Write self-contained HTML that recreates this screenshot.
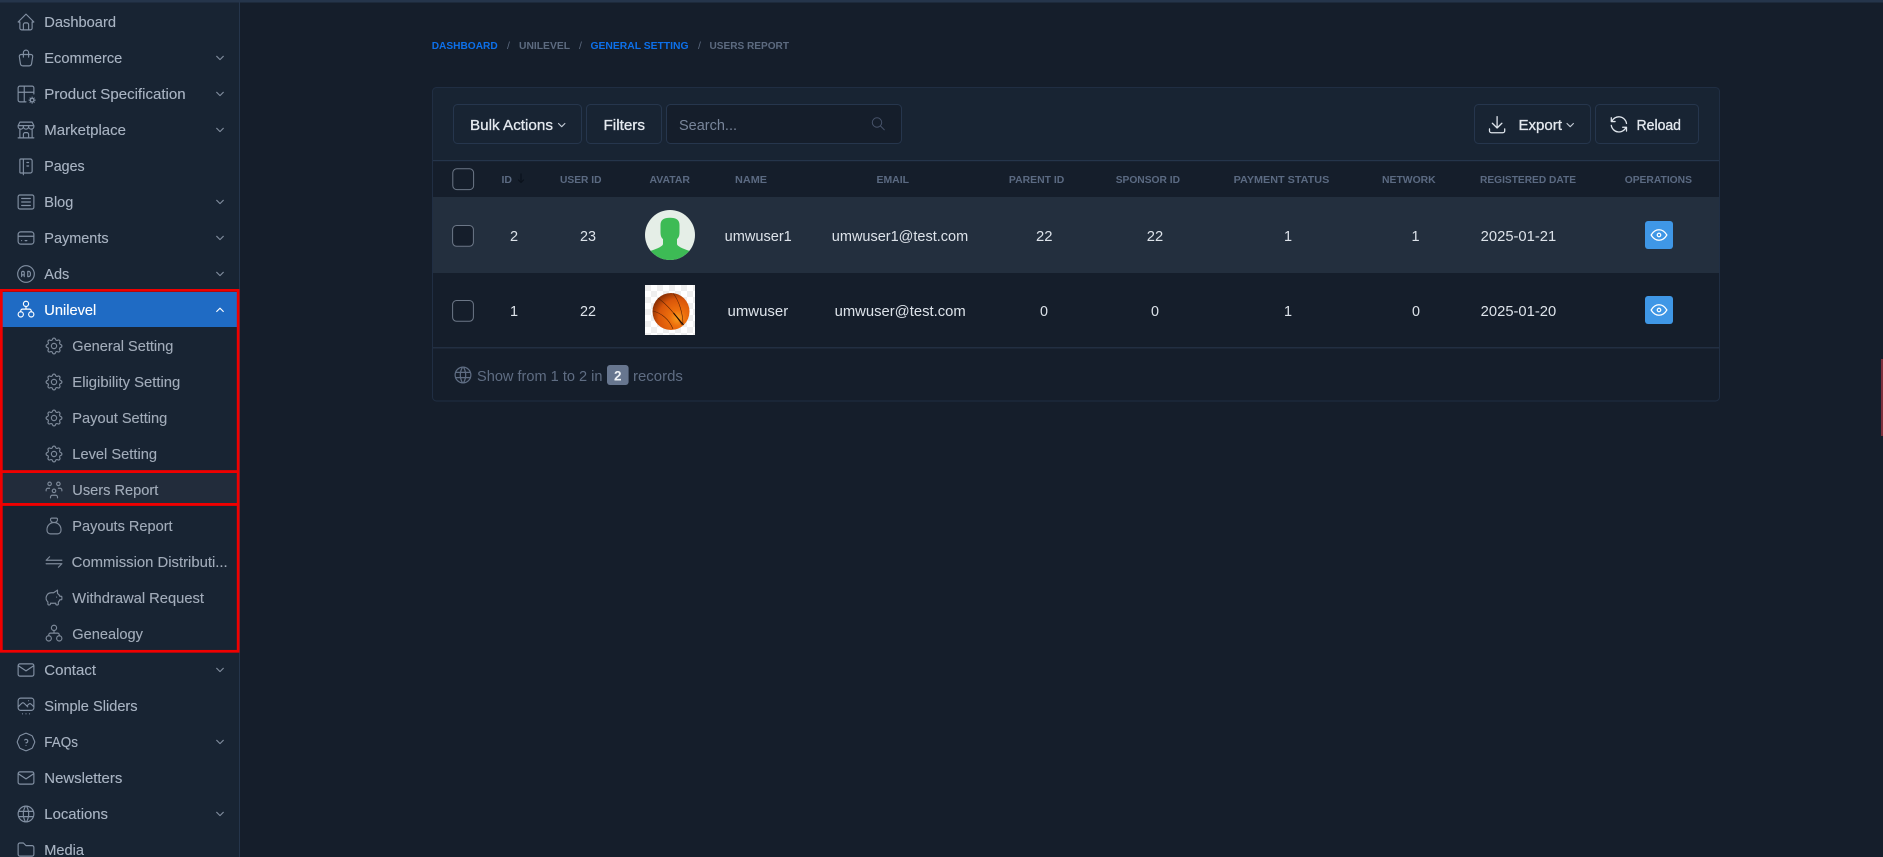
<!DOCTYPE html>
<html lang="en">
<head>
<meta charset="utf-8">
<title>Users Report</title>
<style>
html,body{margin:0;padding:0;background:#151e2b;width:1883px;height:857px;overflow:hidden}
svg{display:block}
text{font-family:"Liberation Sans",Arial,sans-serif;white-space:pre}
.n{font-size:14.5px;fill:#a9b4c3;stroke:#a9b4c3;stroke-width:.12}
.s{font-size:14.5px;fill:#a2acba;stroke:#a2acba;stroke-width:.12}
.h{font-size:10.5px;font-weight:bold;fill:#5b6a82}
.b{font-size:10.5px;font-weight:bold}
.d{font-size:14.5px;fill:#dde3ea}
.m{text-anchor:middle}
.btn{font-size:14.5px;fill:#e4e9ef;stroke:#e4e9ef;stroke-width:.3}
.f{font-size:14.5px;fill:#5f6d83}
.i{fill:none;stroke:#8290a3;stroke-width:1.3;stroke-linecap:round;stroke-linejoin:round}
.i2{fill:none;stroke:#7d8999;stroke-width:1.3;stroke-linecap:round;stroke-linejoin:round}
.c{fill:none;stroke:#7f8b9c;stroke-width:1.1;stroke-linecap:round;stroke-linejoin:round}
</style>
</head>
<body>
<svg xmlns="http://www.w3.org/2000/svg" width="1883" height="857" viewBox="0 0 1883 857">
<defs>
<symbol id="home" viewBox="0 0 24 24"><path d="M5 12l-2 0l9 -9l9 9l-2 0M5 12v7a2 2 0 0 0 2 2h10a2 2 0 0 0 2 -2v-7M9 21v-6a2 2 0 0 1 2 -2h2a2 2 0 0 1 2 2v6"/></symbol>
<symbol id="bag" viewBox="0 0 24 24"><path d="M6.331 8h11.339a2 2 0 0 1 1.977 2.304l-1.255 8.152a3 3 0 0 1 -2.966 2.544h-6.852a3 3 0 0 1 -2.965 -2.544l-1.255 -8.152a2 2 0 0 1 1.977 -2.304zM9 11v-5a3 3 0 0 1 6 0v5"/></symbol>
<symbol id="spec" viewBox="0 0 24 24"><path d="M12 21h-7a2 2 0 0 1 -2 -2v-14a2 2 0 0 1 2 -2h14a2 2 0 0 1 2 2v7M3 10h18M10 3v18"/><circle cx="19" cy="19" r="2"/><path d="M19 15.500v1.200M19 21.300v1.200M15.500 19h1.200M21.300 19h1.200M16.600 16.600l.8 .8M20.600 20.600l.8 .8M16.600 21.400l.8 -.8M20.600 17.400l.8 -.8"/></symbol>
<symbol id="store" viewBox="0 0 24 24"><path d="M3 21l18 0M3 7v1a3 3 0 0 0 6 0v-1m0 1a3 3 0 0 0 6 0v-1m0 1a3 3 0 0 0 6 0v-1h-18l2 -4h14l2 4M5 21l0 -10.150M19 21l0 -10.150M9 21v-4a2 2 0 0 1 2 -2h2a2 2 0 0 1 2 2v4"/></symbol>
<symbol id="note" viewBox="0 0 24 24"><path d="M6 4h11a2 2 0 0 1 2 2v12a2 2 0 0 1 -2 2h-11a1 1 0 0 1 -1 -1v-14a1 1 0 0 1 1 -1m3 0v18M13 8l2 0M13 12l2 0"/></symbol>
<symbol id="article" viewBox="0 0 24 24"><path d="M3 6a2 2 0 0 1 2 -2h14a2 2 0 0 1 2 2v12a2 2 0 0 1 -2 2h-14a2 2 0 0 1 -2 -2zM7 8h10M7 12h10M7 16h10"/></symbol>
<symbol id="card" viewBox="0 0 24 24"><path d="M3 8a3 3 0 0 1 3 -3h12a3 3 0 0 1 3 3v8a3 3 0 0 1 -3 3h-12a3 3 0 0 1 -3 -3zM3 10l18 0M7 15l.01 0M11 15l2 0"/></symbol>
<symbol id="ad" viewBox="0 0 24 24"><path d="M12 12m-9.500 0a9.500 9.500 0 1 0 19 0a9.500 9.500 0 1 0 -19 0M7 15v-4.500a1.500 1.500 0 0 1 3 0v4.500M7 13h3M14 9v6h1a2 2 0 0 0 2 -2v-2a2 2 0 0 0 -2 -2h-1z"/></symbol>
<symbol id="tree" viewBox="0 0 24 24"><circle cx="12" cy="5" r="3"/><circle cx="6" cy="17" r="3"/><circle cx="18" cy="17" r="3"/><path d="M12 8v3M6 14v-1a2 2 0 0 1 2 -2h8a2 2 0 0 1 2 2v1"/></symbol>
<symbol id="gear" viewBox="0 0 24 24"><path d="M10.325 4.317c.426 -1.756 2.924 -1.756 3.350 0a1.724 1.724 0 0 0 2.573 1.066c1.543 -.94 3.310 .826 2.370 2.370a1.724 1.724 0 0 0 1.065 2.572c1.756 .426 1.756 2.924 0 3.350a1.724 1.724 0 0 0 -1.066 2.573c.94 1.543 -.826 3.310 -2.370 2.370a1.724 1.724 0 0 0 -2.572 1.065c-.426 1.756 -2.924 1.756 -3.350 0a1.724 1.724 0 0 0 -2.573 -1.066c-1.543 .94 -3.310 -.826 -2.370 -2.370a1.724 1.724 0 0 0 -1.065 -2.572c-1.756 -.426 -1.756 -2.924 0 -3.350a1.724 1.724 0 0 0 1.066 -2.573c-.94 -1.543 .826 -3.310 2.370 -2.370c1 .608 2.296 .07 2.572 -1.065z"/><circle cx="12" cy="12" r="3"/></symbol>
<symbol id="users" viewBox="0 0 24 24"><path d="M10 13a2 2 0 1 0 4 0a2 2 0 0 0 -4 0M8 21v-1a2 2 0 0 1 2 -2h4a2 2 0 0 1 2 2v1M15 5a2 2 0 1 0 4 0a2 2 0 0 0 -4 0M17 10h2a2 2 0 0 1 2 2v1M5 5a2 2 0 1 0 4 0a2 2 0 0 0 -4 0M3 13v-1a2 2 0 0 1 2 -2h2"/></symbol>
<symbol id="money" viewBox="0 0 24 24"><path d="M9.500 3h5a1.500 1.500 0 0 1 1.500 1.500a3.500 3.500 0 0 1 -3.500 3.500h-1a3.500 3.500 0 0 1 -3.500 -3.500a1.500 1.500 0 0 1 1.500 -1.500zM4 17v-1a8 8 0 1 1 16 0v1a4 4 0 0 1 -4 4h-8a4 4 0 0 1 -4 -4z"/></symbol>
<symbol id="swap" viewBox="0 0 24 24"><path d="M21 10h-18l4 -4M3 14h18l-4 4"/></symbol>
<symbol id="pig" viewBox="0 0 24 24"><path d="M15 11v.01M16 3l0 3.803a6.019 6.019 0 0 1 2.658 3.197h1.341a1 1 0 0 1 1 1v2a1 1 0 0 1 -1 1h-1.342a6.008 6.008 0 0 1 -1.658 2.473v2.027a1.500 1.500 0 0 1 -3 0v-.583a6.040 6.040 0 0 1 -1 .083h-4a6.040 6.040 0 0 1 -1 -.083v.583a1.500 1.500 0 0 1 -3 0v-2.027a6 6 0 0 1 3.999 -10.473h2.500l4.500 -3z"/></symbol>
<symbol id="mail" viewBox="0 0 24 24"><path d="M3 7a2 2 0 0 1 2 -2h14a2 2 0 0 1 2 2v10a2 2 0 0 1 -2 2h-14a2 2 0 0 1 -2 -2v-10zM3 7l9 6l9 -6"/></symbol>
<symbol id="slide" viewBox="0 0 24 24"><path d="M15 6l.01 0M3 6a3 3 0 0 1 3 -3h12a3 3 0 0 1 3 3v8a3 3 0 0 1 -3 3h-12a3 3 0 0 1 -3 -3zM3 13l4 -4a3 5 0 0 1 3 0l4 4M13 12l2 -2a3 5 0 0 1 3 0l3 3M8 21l.01 0M12 21l.01 0M16 21l.01 0"/></symbol>
<symbol id="help" viewBox="0 0 24 24"><path d="M12.802 2.165l5.575 2.389c.48 .206 .863 .589 1.070 1.070l2.388 5.574c.22 .512 .22 1.092 0 1.604l-2.389 5.575c-.206 .48 -.589 .863 -1.070 1.070l-5.574 2.388c-.512 .22 -1.092 .22 -1.604 0l-5.575 -2.389a2.036 2.036 0 0 1 -1.070 -1.070l-2.388 -5.574a2.036 2.036 0 0 1 0 -1.604l2.389 -5.575c.206 -.48 .589 -.863 1.070 -1.070l5.574 -2.388a2.036 2.036 0 0 1 1.604 0zM12 16v.01M12 13a2 2 0 0 0 .914 -3.782a1.980 1.980 0 0 0 -2.414 .483"/></symbol>
<symbol id="world" viewBox="0 0 24 24"><path d="M3 12a9 9 0 1 0 18 0a9 9 0 0 0 -18 0M3.600 9h16.800M3.600 15h16.800M11.500 3a17 17 0 0 0 0 18M12.500 3a17 17 0 0 1 0 18"/></symbol>
<symbol id="folder" viewBox="0 0 24 24"><path d="M5 4h4l3 3h7a2 2 0 0 1 2 2v8a2 2 0 0 1 -2 2h-14a2 2 0 0 1 -2 -2v-11a2 2 0 0 1 2 -2"/></symbol>
<symbol id="eye" viewBox="0 0 24 24"><path d="M10 12a2 2 0 1 0 4 0a2 2 0 0 0 -4 0M21 12c-2.400 4 -5.400 6 -9 6c-3.600 0 -6.600 -2 -9 -6c2.400 -4 5.400 -6 9 -6c3.600 0 6.600 2 9 6"/></symbol>
<pattern id="chk" x="645" y="285" width="12" height="12" patternUnits="userSpaceOnUse"><rect width="12" height="12" fill="#fff"/><rect width="6" height="6" fill="#efefef"/><rect x="6" y="6" width="6" height="6" fill="#efefef"/></pattern>
<radialGradient id="ball" cx="0.68" cy="0.68" r="0.72"><stop offset="0" stop-color="#f8a020"/><stop offset=".3" stop-color="#ee6f0c"/><stop offset=".72" stop-color="#d9560a"/><stop offset="1" stop-color="#8f3204"/></radialGradient>
<clipPath id="av1"><circle cx="670" cy="235" r="25"/></clipPath>
<clipPath id="av2"><circle cx="671" cy="311.500" r="18.500"/></clipPath>
</defs>

<!-- backgrounds -->
<rect width="1883" height="857" fill="#151e2b"/>
<rect x="0" y="0" width="239" height="857" fill="#182433"/>
<rect x="239" y="0" width="1" height="857" fill="#25354b"/>
<rect x="0" y="0" width="1883" height="2.500" fill="#25354b"/>
<rect x="1881" y="359" width="2" height="77" fill="#80303c"/>

<!-- sidebar highlights -->
<rect x="0" y="292" width="239" height="35" fill="#1f6bc4"/>
<rect x="0" y="473" width="239" height="30" fill="#222c3b"/>

<!-- sidebar icons -->
<g class="i">
<use href="#home" x="15.500" y="11.500" width="21" height="21"/>
<use href="#bag" x="15.500" y="47.500" width="21" height="21"/>
<use href="#spec" x="15.500" y="83.500" width="21" height="21"/>
<use href="#store" x="15.500" y="119.500" width="21" height="21"/>
<use href="#note" x="15.500" y="155.500" width="21" height="21"/>
<use href="#article" x="15.500" y="191.500" width="21" height="21"/>
<use href="#card" x="15.500" y="227.500" width="21" height="21"/>
<use href="#ad" x="15.500" y="263.500" width="21" height="21"/>
<use href="#mail" x="15.500" y="659.500" width="21" height="21"/>
<use href="#slide" x="15.500" y="695.500" width="21" height="21"/>
<use href="#help" x="15.500" y="731.500" width="21" height="21"/>
<use href="#mail" x="15.500" y="767.500" width="21" height="21"/>
<use href="#world" x="15.500" y="803.500" width="21" height="21"/>
<use href="#folder" x="15.500" y="839.500" width="21" height="21"/>
</g>
<g class="i" style="stroke:#fff"><use href="#tree" x="15.500" y="299.500" width="21" height="21"/></g>
<g class="i2">
<use href="#gear" x="43.500" y="335.500" width="21" height="21"/>
<use href="#gear" x="43.500" y="371.500" width="21" height="21"/>
<use href="#gear" x="43.500" y="407.500" width="21" height="21"/>
<use href="#gear" x="43.500" y="443.500" width="21" height="21"/>
<use href="#users" x="43.500" y="479.500" width="21" height="21"/>
<use href="#money" x="43.500" y="515.500" width="21" height="21"/>
<use href="#swap" x="43.500" y="551.500" width="21" height="21"/>
<use href="#pig" x="43.500" y="587.500" width="21" height="21"/>
<use href="#tree" x="43.500" y="623.500" width="21" height="21"/>
</g>

<!-- sidebar text -->
<text class="n" x="44.300" y="27" textLength="71.700" lengthAdjust="spacingAndGlyphs">Dashboard</text>
<text class="n" x="44.300" y="63" textLength="78" lengthAdjust="spacingAndGlyphs">Ecommerce</text>
<text class="n" x="44.300" y="99" textLength="141.300" lengthAdjust="spacingAndGlyphs">Product Specification</text>
<text class="n" x="44.300" y="135" textLength="81.700" lengthAdjust="spacingAndGlyphs">Marketplace</text>
<text class="n" x="44.300" y="171" textLength="40.300" lengthAdjust="spacingAndGlyphs">Pages</text>
<text class="n" x="44.300" y="207" textLength="29" lengthAdjust="spacingAndGlyphs">Blog</text>
<text class="n" x="44.300" y="243" textLength="64.300" lengthAdjust="spacingAndGlyphs">Payments</text>
<text class="n" x="44.300" y="279" textLength="25" lengthAdjust="spacingAndGlyphs">Ads</text>
<text class="n" x="44.300" y="315" textLength="52" lengthAdjust="spacingAndGlyphs" style="fill:#fff;stroke:#fff">Unilevel</text>
<text class="s" x="72.300" y="351" textLength="101" lengthAdjust="spacingAndGlyphs">General Setting</text>
<text class="s" x="72.300" y="387" textLength="108" lengthAdjust="spacingAndGlyphs">Eligibility Setting</text>
<text class="s" x="72.300" y="423" textLength="95" lengthAdjust="spacingAndGlyphs">Payout Setting</text>
<text class="s" x="72.300" y="459" textLength="84.700" lengthAdjust="spacingAndGlyphs">Level Setting</text>
<text class="s" x="72.300" y="495" textLength="86" lengthAdjust="spacingAndGlyphs">Users Report</text>
<text class="s" x="72.300" y="531" textLength="100.300" lengthAdjust="spacingAndGlyphs">Payouts Report</text>
<text class="s" x="71.700" y="567" textLength="156" lengthAdjust="spacingAndGlyphs">Commission Distributi...</text>
<text class="s" x="72.300" y="603" textLength="131.700" lengthAdjust="spacingAndGlyphs">Withdrawal Request</text>
<text class="s" x="72.300" y="639" textLength="70.700" lengthAdjust="spacingAndGlyphs">Genealogy</text>
<text class="n" x="44.300" y="675" textLength="51.700" lengthAdjust="spacingAndGlyphs">Contact</text>
<text class="n" x="44.300" y="711" textLength="93.300" lengthAdjust="spacingAndGlyphs">Simple Sliders</text>
<text class="n" x="44.300" y="747" textLength="33.700" lengthAdjust="spacingAndGlyphs">FAQs</text>
<text class="n" x="44.300" y="783" textLength="78" lengthAdjust="spacingAndGlyphs">Newsletters</text>
<text class="n" x="44.300" y="819" textLength="63.700" lengthAdjust="spacingAndGlyphs">Locations</text>
<text class="n" x="44.300" y="855" textLength="39.700" lengthAdjust="spacingAndGlyphs">Media</text>

<!-- chevrons -->
<g class="c">
<path d="M216.700 56.300l3.300 3.300 3.300-3.300M216.700 92.300l3.300 3.300 3.300-3.300M216.700 128.300l3.300 3.300 3.300-3.300M216.700 200.300l3.300 3.300 3.300-3.300M216.700 236.300l3.300 3.300 3.300-3.300M216.700 272.300l3.300 3.300 3.300-3.300M216.700 668.300l3.300 3.300 3.300-3.300M216.700 740.300l3.300 3.300 3.300-3.300M216.700 812.300l3.300 3.300 3.300-3.300"/>
<path d="M216.700 311.500l3.300-3.300 3.300 3.300" style="stroke:#fff"/>
</g>

<!-- red highlight boxes -->
<g fill="none" stroke="#f00000" stroke-width="2.700">
<rect x="1.350" y="290.350" width="236.800" height="181.300"/>
<rect x="1.350" y="471.600" width="236.800" height="32.800"/>
<rect x="1.350" y="504.400" width="236.800" height="146.900"/>
</g>

<!-- breadcrumb -->
<text class="b" x="431.700" y="49" textLength="66" lengthAdjust="spacingAndGlyphs" fill="#0d70ea">DASHBOARD</text>
<text class="b" x="507" y="49" fill="#5d6b80" style="font-weight:normal">/</text>
<text class="b" x="519" y="49" textLength="51" lengthAdjust="spacingAndGlyphs" fill="#5d6b80">UNILEVEL</text>
<text class="b" x="579" y="49" fill="#5d6b80" style="font-weight:normal">/</text>
<text class="b" x="590.500" y="49" textLength="98" lengthAdjust="spacingAndGlyphs" fill="#0d70ea">GENERAL SETTING</text>
<text class="b" x="698" y="49" fill="#5d6b80" style="font-weight:normal">/</text>
<text class="b" x="709.500" y="49" textLength="79.500" lengthAdjust="spacingAndGlyphs" fill="#5d6b80">USERS REPORT</text>

<!-- card -->
<rect x="432.500" y="87.500" width="1287" height="313.500" rx="4" fill="#151e2b"/>
<path d="M433 161V91.500a4 4 0 0 1 4-4H1715a4 4 0 0 1 4 4V161z" fill="#182433"/>
<rect x="433" y="160" width="1286" height="1.200" fill="#25354b"/>
<rect x="433" y="197" width="1286" height="76" fill="#232f3e"/>
<rect x="433" y="347" width="1286" height="1.500" fill="#222f42"/>
<rect x="432.500" y="87.500" width="1287" height="313.500" rx="4" fill="none" stroke="#202e43"/>

<!-- toolbar -->
<g stroke="#26364d" fill="#182433">
<rect x="453.500" y="104.500" width="128" height="39" rx="4"/>
<rect x="586.500" y="104.500" width="75" height="39" rx="4"/>
<rect x="666.500" y="104.500" width="235" height="39" rx="4" fill="#151e2b"/>
<rect x="1474.500" y="104.500" width="116" height="39" rx="4"/>
<rect x="1595.500" y="104.500" width="103" height="39" rx="4"/>
</g>
<text class="btn" x="470" y="130" textLength="83" lengthAdjust="spacingAndGlyphs">Bulk Actions</text>
<path d="M558.500 123.500l3.200 3.200 3.200-3.200" fill="none" stroke="#c4ccd6" stroke-width="1.100" stroke-linecap="round" stroke-linejoin="round"/>
<text class="btn" x="603.500" y="130" textLength="41.500" lengthAdjust="spacingAndGlyphs">Filters</text>
<text x="679" y="130" font-size="14.500" fill="#78859a" textLength="58" lengthAdjust="spacingAndGlyphs">Search...</text>
<path d="M877 117.800a4.700 4.700 0 1 0 0 9.400 4.700 4.700 0 0 0 0-9.400zM880.500 126l3.800 3.800" fill="none" stroke="#47536a" stroke-width="1" stroke-linecap="round"/>
<g fill="none" stroke="#dfe5ec" stroke-width="1.350" stroke-linecap="round" stroke-linejoin="round">
<g transform="translate(1485.700 112.800) scale(.95)"><path d="M4 17v2a2 2 0 0 0 2 2h12a2 2 0 0 0 2 -2v-2M7 11l5 5l5 -5M12 4l0 12"/></g>
<g transform="translate(1607.500 113) scale(.95)"><path d="M20 11a8.100 8.100 0 0 0 -15.500 -2m-.5 -4v4h4M4 13a8.100 8.100 0 0 0 15.500 2m.5 4v-4h-4"/></g>
</g>
<text class="btn" x="1518.500" y="130" textLength="43.500" lengthAdjust="spacingAndGlyphs">Export</text>
<path d="M1567 123.500l3.200 3.200 3.200-3.200" fill="none" stroke="#c4ccd6" stroke-width="1.100" stroke-linecap="round" stroke-linejoin="round"/>
<text class="btn" x="1636.500" y="130" textLength="44.500" lengthAdjust="spacingAndGlyphs">Reload</text>

<!-- table head -->
<rect x="452.800" y="168.800" width="20.800" height="20.800" rx="4" fill="none" stroke="#6c7787" stroke-width="1"/>
<text class="h" x="501.500" y="183" textLength="10.500" lengthAdjust="spacingAndGlyphs">ID</text>
<path d="M521 174v8.500M518.500 180l2.500 2.500 2.500-2.500" fill="none" stroke="#0b121c" stroke-width="1.200" stroke-linecap="round" stroke-linejoin="round"/>
<text class="h" x="560" y="183" textLength="41.500" lengthAdjust="spacingAndGlyphs">USER ID</text>
<text class="h" x="649.500" y="183" textLength="40.500" lengthAdjust="spacingAndGlyphs">AVATAR</text>
<text class="h" x="735" y="183" textLength="32" lengthAdjust="spacingAndGlyphs">NAME</text>
<text class="h" x="876.500" y="183" textLength="32.500" lengthAdjust="spacingAndGlyphs">EMAIL</text>
<text class="h" x="1008.900" y="183" textLength="55.400" lengthAdjust="spacingAndGlyphs">PARENT ID</text>
<text class="h" x="1115.700" y="183" textLength="64.300" lengthAdjust="spacingAndGlyphs">SPONSOR ID</text>
<text class="h" x="1233.600" y="183" textLength="95.700" lengthAdjust="spacingAndGlyphs">PAYMENT STATUS</text>
<text class="h" x="1382" y="183" textLength="53.700" lengthAdjust="spacingAndGlyphs">NETWORK</text>
<text class="h" x="1480" y="183" textLength="96" lengthAdjust="spacingAndGlyphs">REGISTERED DATE</text>
<text class="h" x="1624.700" y="183" textLength="67.300" lengthAdjust="spacingAndGlyphs">OPERATIONS</text>

<!-- row 1 -->
<rect x="452.600" y="225.500" width="20.800" height="20.800" rx="4" fill="#151e2b" stroke="#6c7787" stroke-width="1"/>
<text class="d m" x="514" y="241">2</text>
<text class="d" x="580" y="241" textLength="16" lengthAdjust="spacingAndGlyphs">23</text>
<circle cx="670" cy="235" r="25" fill="#e5eee7"/>
<path clip-path="url(#av1)" d="M660.500 225C660.500 219.500 664 217.700 670 217.700C676 217.700 679.500 219.500 679.500 225L679.500 232C679.500 236 678.500 238 677 239L677 244C677 246 682 248.500 690 251L690 262L650 262L650 251C658 248.500 663 246 663 244L663 239C661.500 238 660.500 236 660.500 232Z" fill="#3dbb55"/>
<text class="d" x="724.600" y="241" textLength="67.200" lengthAdjust="spacingAndGlyphs">umwuser1</text>
<text class="d" x="831.800" y="241" textLength="136.400" lengthAdjust="spacingAndGlyphs">umwuser1@test.com</text>
<text class="d" x="1036" y="241" textLength="16.500" lengthAdjust="spacingAndGlyphs">22</text>
<text class="d" x="1146.800" y="241" textLength="16.400" lengthAdjust="spacingAndGlyphs">22</text>
<text class="d m" x="1288" y="241">1</text>
<text class="d m" x="1415.500" y="241">1</text>
<text class="d" x="1480.700" y="241" textLength="75.500" lengthAdjust="spacingAndGlyphs">2025-01-21</text>
<rect x="1645" y="221" width="28" height="28" rx="3" fill="#3f97e6"/>
<g fill="none" stroke="#fff" stroke-width="1.400" stroke-linecap="round" stroke-linejoin="round"><use href="#eye" x="1648.500" y="224.500" width="21" height="21"/></g>

<!-- row 2 -->
<rect x="452.600" y="300.500" width="20.800" height="20.800" rx="4" fill="none" stroke="#6c7787" stroke-width="1"/>
<text class="d m" x="514" y="316">1</text>
<text class="d" x="580" y="316" textLength="16" lengthAdjust="spacingAndGlyphs">22</text>
<rect x="645" y="285" width="50" height="50" fill="url(#chk)"/>
<circle cx="671" cy="311.500" r="18.500" fill="url(#ball)"/>
<g clip-path="url(#av2)" fill="none" stroke="#5a2306" stroke-width=".6">
<path d="M658 298c8 6 16 14 24 27"/>
<path d="M673 293c6 8 10 20 10 32"/>
<path d="M653 311c8 2 16 8 20 18"/>
</g>
<path d="M673.500 313l10 12" stroke="#1a0a02" stroke-width="1" fill="none"/>
<text class="d" x="727.500" y="316" textLength="60.700" lengthAdjust="spacingAndGlyphs">umwuser</text>
<text class="d" x="834.600" y="316" textLength="131.100" lengthAdjust="spacingAndGlyphs">umwuser@test.com</text>
<text class="d" x="1040" y="316" textLength="8" lengthAdjust="spacingAndGlyphs">0</text>
<text class="d" x="1151" y="316" textLength="8" lengthAdjust="spacingAndGlyphs">0</text>
<text class="d m" x="1288" y="316">1</text>
<text class="d" x="1412" y="316" textLength="8" lengthAdjust="spacingAndGlyphs">0</text>
<text class="d" x="1480.700" y="316" textLength="75.500" lengthAdjust="spacingAndGlyphs">2025-01-20</text>
<rect x="1645" y="296" width="28" height="28" rx="3" fill="#3f97e6"/>
<g fill="none" stroke="#fff" stroke-width="1.400" stroke-linecap="round" stroke-linejoin="round"><use href="#eye" x="1648.500" y="299.500" width="21" height="21"/></g>

<!-- footer -->
<g fill="none" stroke="#5f6d83" stroke-width="1.400" stroke-linecap="round" stroke-linejoin="round"><use href="#world" x="452.500" y="364.500" width="21" height="21"/></g>
<text class="f" x="477" y="381" textLength="125.500" lengthAdjust="spacingAndGlyphs">Show from 1 to 2 in</text>
<rect x="607" y="365" width="21.600" height="20" rx="3" fill="#67768f"/>
<text x="617.800" y="380.500" text-anchor="middle" font-size="13.500" font-weight="bold" fill="#eef2f6">2</text>
<text class="f" x="633" y="381" textLength="49.900" lengthAdjust="spacingAndGlyphs">records</text>
</svg>
</body>
</html>
